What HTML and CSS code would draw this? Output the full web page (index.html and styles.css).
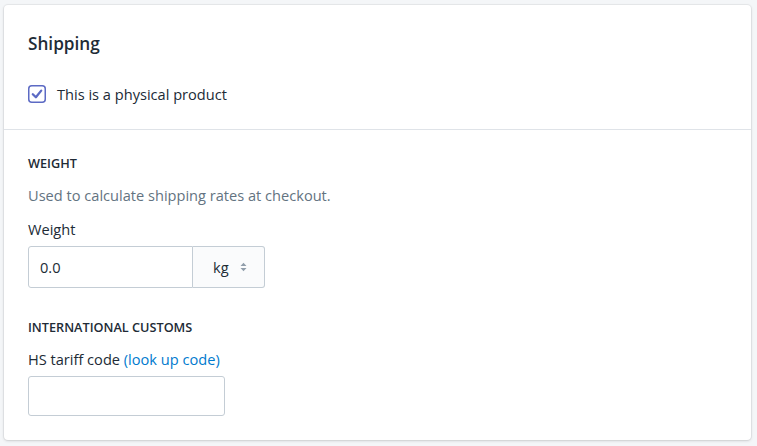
FILE: index.html
```html
<!DOCTYPE html>
<html lang="en">
<head>
<meta charset="utf-8">
<title>Shipping</title>
<link rel="stylesheet" href="styles.css">
</head>
<body>
<div class="card">
  <section class="section section-top">
    <h2 class="heading">Shipping</h2>
    <label class="check-row">
      <svg class="checkbox" viewBox="0 0 18 18" width="18" height="18"><rect x="0.75" y="0.75" width="16.5" height="16.5" rx="3" fill="#fff" stroke="#5c6ac4" stroke-width="1.5"/><path d="M4.8 9.2l3.1 3.1 5.3-6.7" fill="none" stroke="#5c6ac4" stroke-width="2.3" stroke-linecap="round" stroke-linejoin="round"/></svg>
      <span class="check-label">This is a physical product</span>
    </label>
  </section>
  <section class="section section-bottom">
    <h3 class="subheading">Weight</h3>
    <p class="help">Used to calculate shipping rates at checkout.</p>
    <div class="field-label">Weight</div>
    <div class="connected">
      <div class="input input-weight">0.0</div>
      <div class="select">
        <span class="select-value">kg</span>
        <svg class="arrows" viewBox="0 0 7 10" width="7" height="10"><path d="M3.5 0.8L6.5 4H0.5z M3.5 9.2L0.5 6h6z" fill="#919eab"/></svg>
      </div>
    </div>
    <h3 class="subheading subheading-customs">International customs</h3>
    <div class="field-label">HS tariff code <a class="link" href="#">(look up code)</a></div>
    <div class="input input-hs"></div>
  </section>
</div>
</body>
</html>
```
FILE: styles.css
```css
html, body {
  margin: 0;
  padding: 0;
}
body {
  background: #f4f6f8;
  padding: 5px 6px 6px 4px;
  font-family: "Open Sans", "Noto Sans", sans-serif;
  color: #212b36;
  font-size: 14.6px;
}
.card {
  background: #fff;
  border-radius: 4px;
  box-shadow: 0 0 0 1px rgba(63, 63, 68, 0.06), 0 1px 3px 0 rgba(63, 63, 68, 0.18);
  height: 435px;
  box-sizing: border-box;
}
.section {
  padding: 0 24px;
}
.section-top {
  padding-top: 27px;
  padding-bottom: 25px;
}
.section-bottom {
  border-top: 1px solid #dfe3e8;
  padding-top: 25px;
}
.heading {
  margin: 0;
  font-size: 17.2px;
  font-weight: 600;
  line-height: 24px;
}
.check-row {
  display: flex;
  align-items: center;
  margin-top: 28px;
  height: 20px;
}
.checkbox {
  display: block;
  flex: none;
}
.check-label {
  margin-left: 11px;
  line-height: 20px;
}
.subheading {
  margin: 0;
  font-size: 12.7px;
  font-weight: 600;
  text-transform: uppercase;
  line-height: 16px;
}
.help {
  margin: 14px 0 0;
  color: #637381;
  line-height: 20px;
}
.field-label {
  margin-top: 14px;
  line-height: 20px;
}
.connected {
  display: flex;
  margin-top: 7px;
  width: 237px;
  height: 42px;
}
.input {
  border: 1px solid #c4cdd5;
  border-radius: 3px;
  box-sizing: border-box;
  background: #fff;
  display: flex;
  align-items: center;
  padding: 0 11px;
}
.input-weight {
  flex: 1;
  border-radius: 3px 0 0 3px;
}
.select {
  width: 72px;
  box-sizing: border-box;
  border: 1px solid #c4cdd5;
  border-left: none;
  border-radius: 0 3px 3px 0;
  background: #fafbfc;
  display: flex;
  align-items: center;
  padding-left: 20px;
}
.arrows {
  margin-left: 11px;
}
.subheading-customs {
  margin-top: 31px;
}
.link {
  color: #007ace;
  text-decoration: none;
}
.input-hs {
  margin-top: 7px;
  width: 197px;
  height: 40px;
}
```
